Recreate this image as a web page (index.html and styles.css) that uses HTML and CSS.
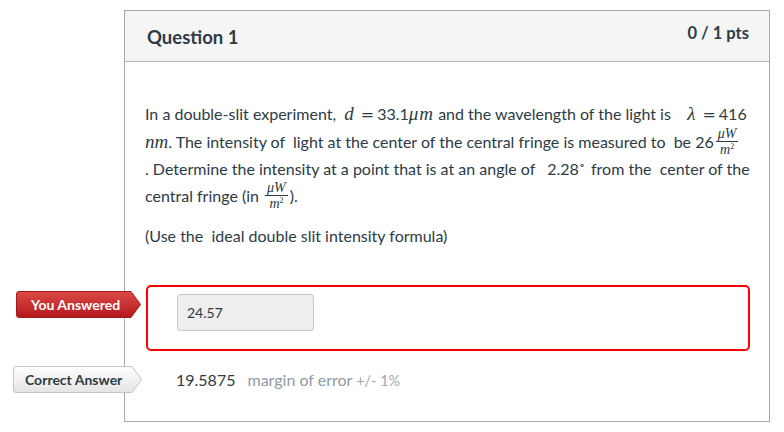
FILE: index.html
```html
<!DOCTYPE html>
<html>
<head>
<meta charset="utf-8">
<link rel="stylesheet" href="styles.css">
</head>
<body>
<div class="question">
  <div class="q-header">
    <span class="q-title">Question 1</span>
    <span class="q-pts">0 / 1 pts</span>
  </div>
  <div class="q-body">
    <p class="q-text">In a double-slit experiment,&nbsp; <i class="m">d</i><span class="eq">=</span>33.1<i class="m mu">μm</i> and the wavelength of the light is&nbsp;&nbsp;&nbsp; <i class="m">λ</i><span class="eq">=</span>416<br><i class="m">nm</i>. The intensity of&nbsp; light at the center of the central fringe is measured to&nbsp; be 26<span class="frac"><span class="num">μW</span><span class="den">m<sup>2</sup></span></span><br>. Determine the intensity at a point that is at an angle of&nbsp;&nbsp; 2.28<sup class="deg">∘</sup> from the&nbsp; center of the<br>central fringe (in <span class="frac"><span class="num">μW</span><span class="den">m<sup>2</sup></span></span>).</p>
    <p class="q-note">(Use the&nbsp; ideal double slit intensity formula)</p>

    <div class="answer wrong">
      <div class="badge badge-red">
        <svg class="badge-bg" viewBox="0 0 125 27" preserveAspectRatio="none" width="125" height="27">
          <defs>
            <linearGradient id="gr" x1="0" y1="0" x2="0" y2="1">
              <stop offset="0" stop-color="#dc4a45"/>
              <stop offset="1" stop-color="#b3191c"/>
            </linearGradient>
          </defs>
          <path d="M3 0.5 H115 L124.5 13.5 L115 26.5 H3 Q0.5 26.5 0.5 24 V3 Q0.5 0.5 3 0.5 Z" fill="url(#gr)" stroke="#a3181a"/>
        </svg>
        <span class="badge-text">You Answered</span>
      </div>
      <div class="input">24.57</div>
    </div>

    <div class="answer correct">
      <div class="badge badge-grey">
        <svg class="badge-bg" viewBox="0 0 129 27" preserveAspectRatio="none" width="129" height="27">
          <defs>
            <linearGradient id="gg" x1="0" y1="0" x2="0" y2="1">
              <stop offset="0" stop-color="#ffffff"/>
              <stop offset="1" stop-color="#e4e4e4"/>
            </linearGradient>
          </defs>
          <path d="M3 0.5 H119 L128.5 13.5 L119 26.5 H3 Q0.5 26.5 0.5 24 V3 Q0.5 0.5 3 0.5 Z" fill="url(#gg)" stroke="#c4c4c4"/>
        </svg>
        <span class="badge-text">Correct Answer</span>
      </div>
      <span class="correct-val">19.5875</span>
      <span class="margin">margin of error <span class="small">+/- 1%</span></span>
    </div>
  </div>
</div>
</body>
</html>
```
FILE: styles.css
```css
html, body {
  margin: 0;
  padding: 0;
  background: #ffffff;
}
body {
  font-family: Lato, "Liberation Sans", sans-serif;
  color: #2d3b45;
  width: 784px;
  height: 432px;
  overflow: hidden;
}
.question {
  margin: 10px 0 0 124px;
  width: 644px;
  height: 410px;
  border: 1px solid #a8a8a8;
  box-sizing: content-box;
}
.q-header {
  height: 50px;
  background: #f5f5f5;
  border-bottom: 1px solid #b5b5b5;
  display: flex;
  justify-content: space-between;
  padding: 0 20px 0 22px;
  position: relative;
}
.q-title {
  font-size: 18.5px;
  font-weight: bold;
  line-height: 18px;
  margin-top: 17px;
}
.q-pts {
  font-size: 16.5px;
  font-weight: bold;
  line-height: 16px;
  margin-top: 14px;
}
.q-body {
  padding: 0 20px 0 20px;
  position: relative;
}
.q-text {
  margin: 38px 0 0 0;
  font-size: 16px;
  line-height: 27px;
  white-space: nowrap;
}
.m {
  font-family: "Liberation Serif", "DejaVu Serif", serif;
  font-style: italic;
  font-size: 19px;
  line-height: 0;
}
.mu {
  letter-spacing: 1px;
}
.eq {
  font-family: "DejaVu Sans", sans-serif;
  font-size: 16px;
  margin: 0 3px 0 7px;
}
.frac {
  display: inline-flex;
  flex-direction: column;
  align-items: center;
  vertical-align: middle;
  font-family: "Liberation Serif", "DejaVu Serif", serif;
  font-style: italic;
  font-size: 14px;
  line-height: 13px;
  margin: -8px 2px -8px 2px;
  position: relative;
  top: -2px;
}
.frac .num {
  border-bottom: 1px solid #2d3b45;
  padding: 0 2px 1px 2px;
}
.frac .den {
  padding-top: 1px;
}
.frac sup {
  font-size: 8px;
  line-height: 0;
  vertical-align: 5px;
  font-style: normal;
}
.deg {
  font-size: 10px;
  line-height: 0;
  vertical-align: 7px;
  margin-right: 2px;
}
.q-note {
  margin: 13px 0 0 0;
  font-size: 16px;
  line-height: 27px;
}
.answer {
  position: relative;
  margin-left: 1px;
}
.wrong {
  margin-top: 36px;
  border: 2px solid #ff0000;
  border-radius: 5px;
  padding: 7px 0 0 29px;
  box-sizing: border-box;
  height: 66px;
  width: 604px;
}
.input {
  width: 137px;
  height: 37px;
  box-sizing: border-box;
  background: #eeeeee;
  border: 1px solid #c8c8c8;
  border-radius: 3px;
  font-size: 14px;
  line-height: 35px;
  padding-left: 9px;
}
.badge {
  position: absolute;
  height: 27px;
  display: flex;
  align-items: center;
}
.badge-bg {
  position: absolute;
  left: 0;
  top: 0;
}
.badge-text {
  position: relative;
  font-size: 14px;
  font-weight: bold;
  line-height: 27px;
}
.badge-red {
  left: -132px;
  top: 4px;
  width: 125px;
}
.badge-red .badge-text {
  color: #ffffff;
  padding-left: 15px;
}
.badge-grey {
  left: -133px;
  top: 1px;
  width: 129px;
}
.badge-grey .badge-text {
  color: #2d3b45;
  padding-left: 12px;
}
.correct {
  margin-top: 14px;
  height: 28px;
  display: flex;
  align-items: center;
  padding-left: 30px;
}
.correct-val {
  font-size: 16px;
  color: #2d3b45;
}
.margin {
  margin-left: 12px;
  font-size: 16px;
  color: #8f9aa3;
}
.margin .small {
  font-size: 14.5px;
  color: #9aa8b5;
}
```
